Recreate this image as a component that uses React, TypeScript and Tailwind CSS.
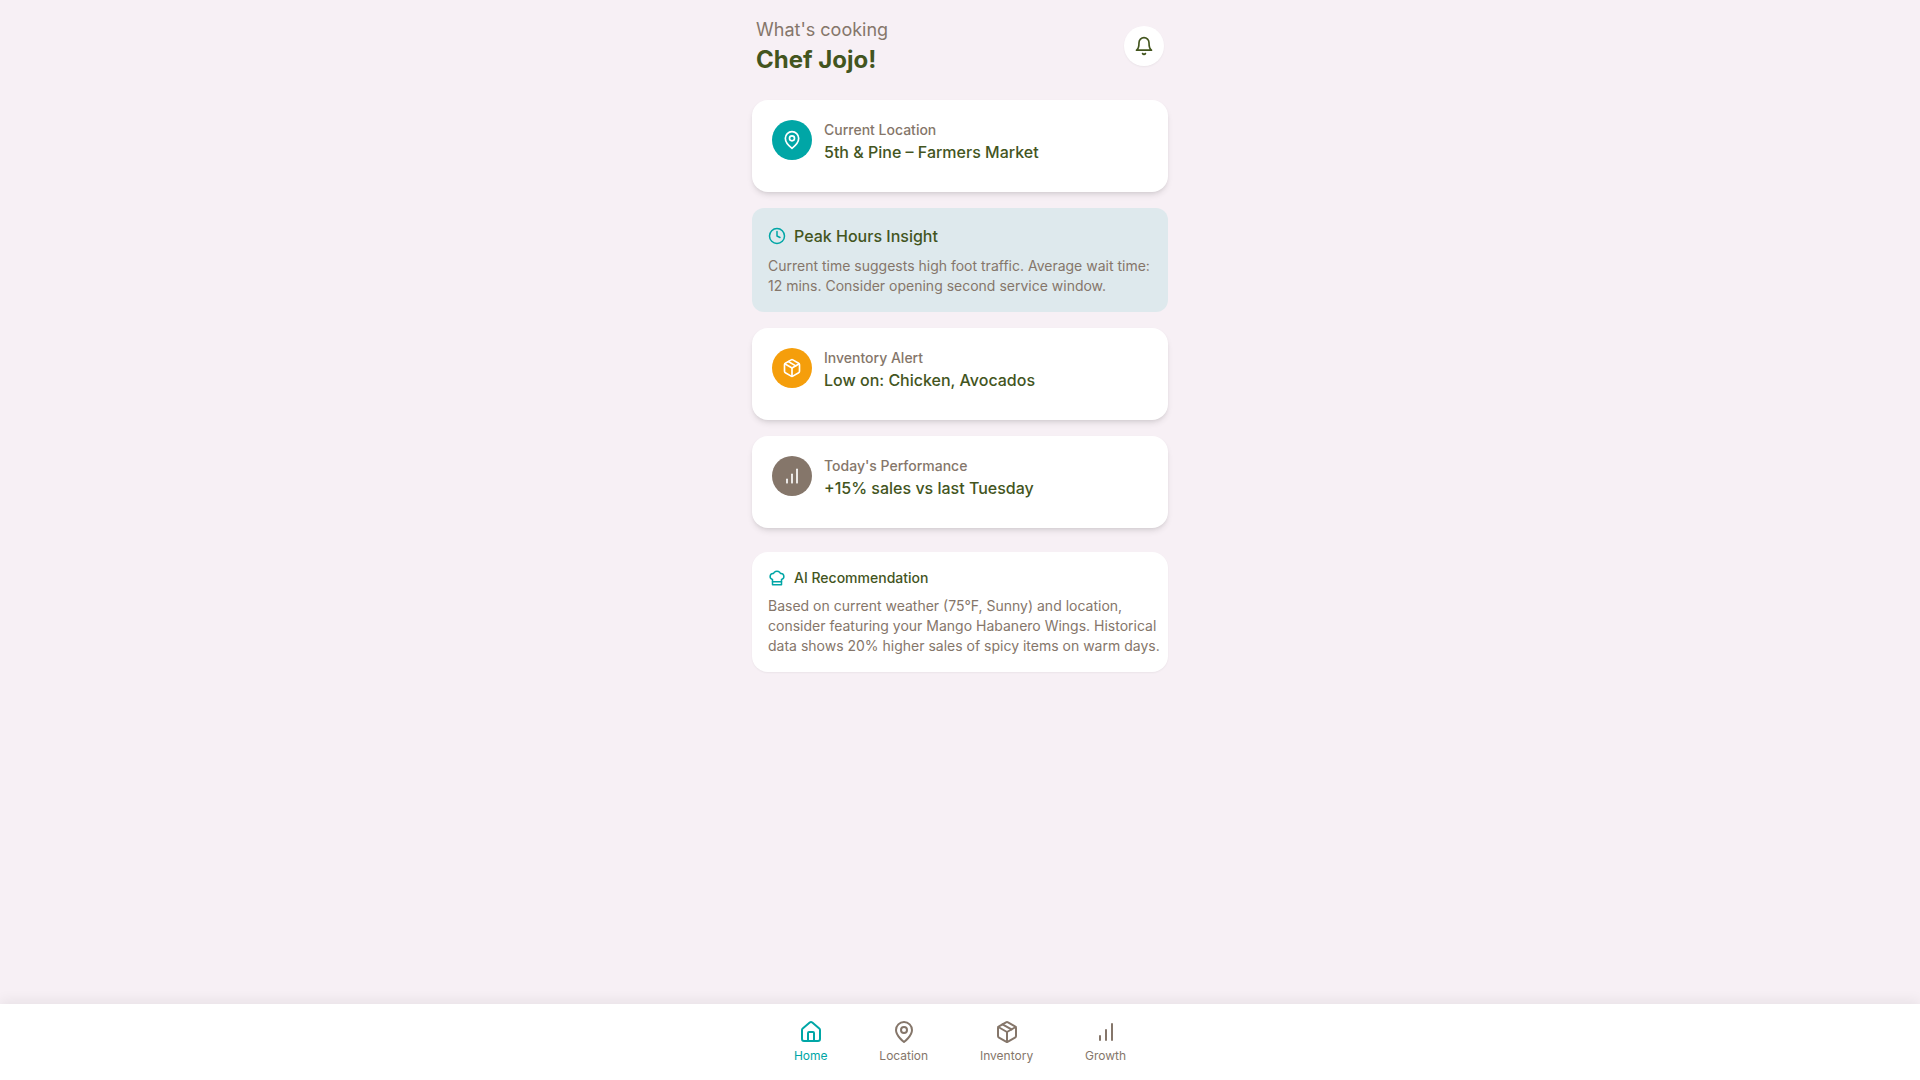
import type { ReactNode } from "react";

type IconProps = { size?: number; className?: string; children?: ReactNode };

function Icon({ size = 24, className, children }: IconProps) {
    return (
        <svg
            width={size}
            height={size}
            viewBox="0 0 24 24"
            fill="none"
            stroke="currentColor"
            strokeWidth={2}
            strokeLinecap="round"
            strokeLinejoin="round"
            className={className}
            aria-hidden="true"
        >
            {children}
        </svg>
    );
}

const BellIcon = (props: IconProps) => (
    <Icon {...props}>
        <path d="M6 8a6 6 0 0 1 12 0c0 7 3 9 3 9H3s3-2 3-9" />
        <path d="M10.3 21a1.94 1.94 0 0 0 3.4 0" />
    </Icon>
);

const PinIcon = (props: IconProps) => (
    <Icon {...props}>
        <path d="M20 10c0 6-8 12-8 12s-8-6-8-12a8 8 0 0 1 16 0Z" />
        <circle cx="12" cy="10" r="3" />
    </Icon>
);

const PackageIcon = (props: IconProps) => (
    <Icon {...props}>
        <path d="m7.5 4.27 9 5.15" />
        <path d="M21 8a2 2 0 0 0-1-1.73l-7-4a2 2 0 0 0-2 0l-7 4A2 2 0 0 0 3 8v8a2 2 0 0 0 1 1.73l7 4a2 2 0 0 0 2 0l7-4A2 2 0 0 0 21 16Z" />
        <path d="m3.3 7 8.7 5 8.7-5" />
        <path d="M12 22V12" />
    </Icon>
);

const BarsIcon = (props: IconProps) => (
    <Icon {...props}>
        <path d="M12 20V10" />
        <path d="M18 20V4" />
        <path d="M6 20v-4" />
    </Icon>
);

const ClockIcon = (props: IconProps) => (
    <Icon {...props}>
        <circle cx="12" cy="12" r="10" />
        <path d="M12 6v6l4 2" />
    </Icon>
);

const ChefHatIcon = (props: IconProps) => (
    <Icon {...props}>
        <path d="M6 13.87A4 4 0 0 1 7.41 6a5.11 5.11 0 0 1 1.05-1.54 5 5 0 0 1 7.08 0A5.11 5.11 0 0 1 16.59 6 4 4 0 0 1 18 13.87V21H6Z" />
        <path d="M6 17h12" />
    </Icon>
);

const HouseIcon = (props: IconProps) => (
    <Icon {...props}>
        <path d="M15 21v-8a1 1 0 0 0-1-1h-4a1 1 0 0 0-1 1v8" />
        <path d="M3 10a2 2 0 0 1 .709-1.528l7-5.999a2 2 0 0 1 2.582 0l7 5.999A2 2 0 0 1 21 10v9a2 2 0 0 1-2 2H5a2 2 0 0 1-2-2z" />
    </Icon>
);

type StatusCardProps = { icon: ReactNode; iconClass: string; label: string; value: string };

function StatusCard({ icon, iconClass, label, value }: StatusCardProps) {
    return (
        <section className="flex items-start gap-3 rounded-2xl bg-white p-5 shadow-md">
            <div className={`flex size-10 shrink-0 items-center justify-center rounded-full text-white ${iconClass}`}>
                {icon}
            </div>
            <div className="pb-2">
                <p className="text-sm font-medium text-[#85766a]">{label}</p>
                <h2 className="text-base font-medium">{value}</h2>
            </div>
        </section>
    );
}

const navItems = [
    { label: "Home", icon: <HouseIcon />, active: true },
    { label: "Location", icon: <PinIcon />, active: false },
    { label: "Inventory", icon: <PackageIcon />, active: false },
    { label: "Growth", icon: <BarsIcon />, active: false },
];

export default function App() {
    return (
        <div className="flex min-h-screen flex-col bg-[#f7f0f5] font-['Inter',sans-serif] text-[#43551e]">
            <main className="mx-auto w-full max-w-md flex-1 p-4">
                <header className="mb-6 flex items-center justify-between px-1">
                    <div>
                        <p className="text-lg text-[#85766a]">What's cooking</p>
                        <h1 className="text-2xl font-bold">Chef Jojo!</h1>
                    </div>
                    <button
                        type="button"
                        aria-label="Notifications"
                        className="flex size-10 items-center justify-center rounded-full bg-white shadow-[0_1px_2px_rgba(0,0,0,0.05)]"
                    >
                        <BellIcon size={20} />
                    </button>
                </header>

                <div className="flex flex-col gap-4">
                    <StatusCard
                        icon={<PinIcon size={20} />}
                        iconClass="bg-[#00a6a6]"
                        label="Current Location"
                        value="5th & Pine – Farmers Market"
                    />

                    <section className="rounded-xl bg-[#dee9ed] p-4">
                        <div className="mb-2 flex items-center gap-2">
                            <ClockIcon size={18} className="text-[#00a6a6]" />
                            <h2 className="text-base font-medium">Peak Hours Insight</h2>
                        </div>
                        <p className="text-sm text-[#85766a]">
                            Current time suggests high foot traffic. Average wait time: 12 mins. Consider opening
                            second service window.
                        </p>
                    </section>

                    <StatusCard
                        icon={<PackageIcon size={20} />}
                        iconClass="bg-[#f59e0b]"
                        label="Inventory Alert"
                        value="Low on: Chicken, Avocados"
                    />
                    <StatusCard
                        icon={<BarsIcon size={20} />}
                        iconClass="bg-[#85766a]"
                        label="Today's Performance"
                        value="+15% sales vs last Tuesday"
                    />
                </div>

                <section className="mt-6 rounded-2xl bg-white py-4 pr-2 pl-4 shadow-[0_1px_2px_rgba(0,0,0,0.05)]">
                    <div className="mb-2 flex items-center gap-2">
                        <ChefHatIcon size={18} className="text-[#00a6a6]" />
                        <h2 className="text-sm font-medium">AI Recommendation</h2>
                    </div>
                    <p className="text-sm text-[#85766a]">
                        Based on current weather (75°F, Sunny) and location, consider featuring your Mango Habanero
                        Wings. Historical data shows 20% higher sales of spicy items on warm days.
                    </p>
                </section>
            </main>

            <nav className="sticky bottom-0 bg-white py-4 shadow-[0_-4px_12px_rgba(0,0,0,0.06)]">
                <div className="mx-auto flex max-w-md justify-around px-8">
                    {navItems.map((item) => (
                        <button
                            key={item.label}
                            type="button"
                            aria-current={item.active ? "page" : undefined}
                            className={`flex flex-col items-center gap-1 ${item.active ? "text-[#00a6a6]" : "text-[#85766a]"}`}
                        >
                            {item.icon}
                            <span className="text-xs">{item.label}</span>
                        </button>
                    ))}
                </div>
            </nav>
        </div>
    );
}
